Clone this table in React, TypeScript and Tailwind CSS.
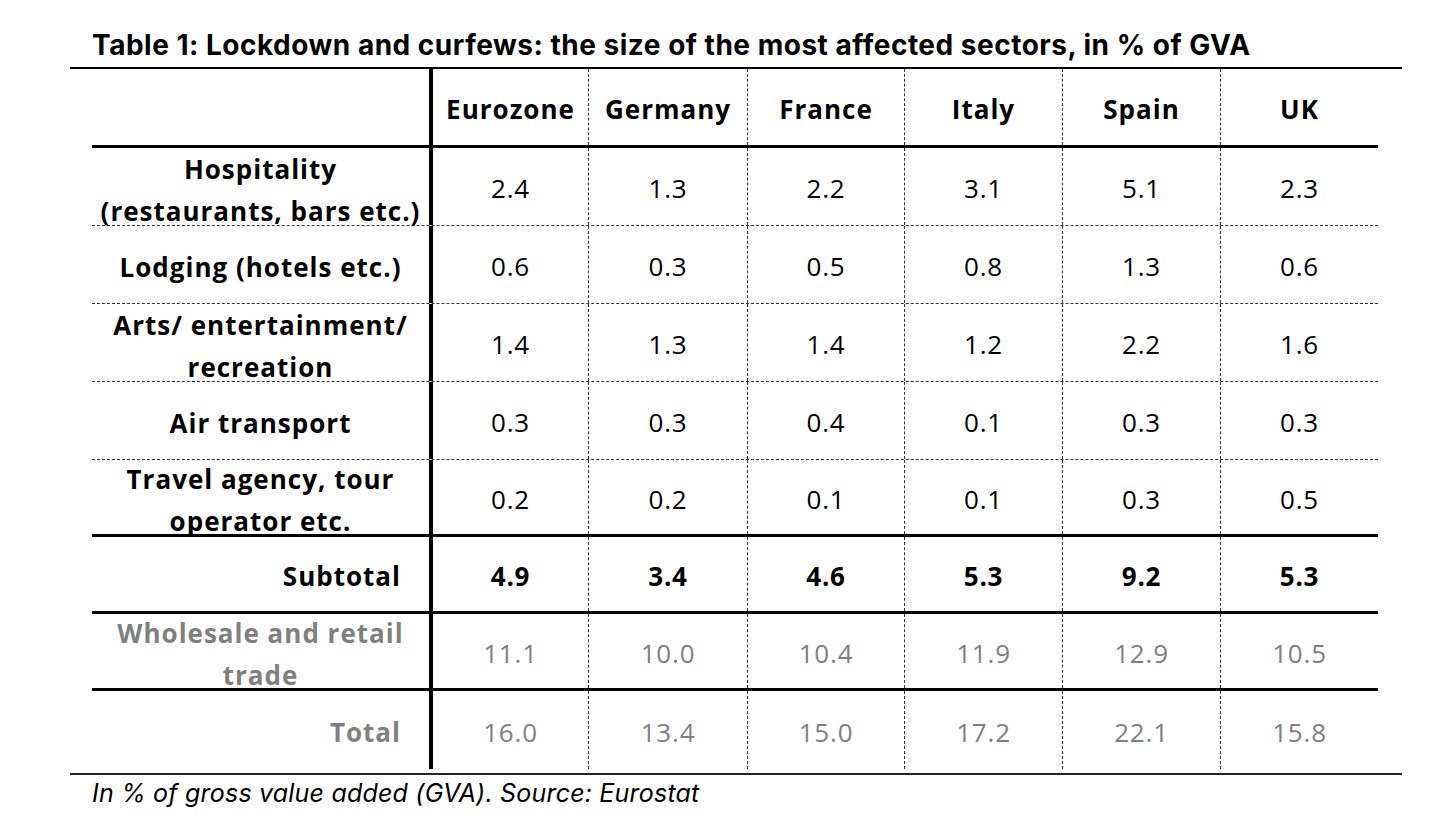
import React from "react";

type Row = {
  label: React.ReactNode;
  values: string[];
  kind: "normal" | "subtotal" | "gray";
  align?: "center" | "right";
  h: string;
  border: string;
  twoLine?: boolean;
};

const widths = ["w-[156px]", "w-[159px]", "w-[157px]", "w-[158px]", "w-[158px]", "w-[157px]"];
const headers = ["Eurozone", "Germany", "France", "Italy", "Spain", "UK"];

const rows: Row[] = [
  {
    label: (
      <>
        Hospitality
        <br />
        (restaurants, bars etc.)
      </>
    ),
    values: ["2.4", "1.3", "2.2", "3.1", "5.1", "2.3"],
    kind: "normal",
    h: "h-[78px]",
    border: "border-b border-dashed border-[#333]",
    twoLine: true,
  },
  {
    label: "Lodging (hotels etc.)",
    values: ["0.6", "0.3", "0.5", "0.8", "1.3", "0.6"],
    kind: "normal",
    h: "h-[78px]",
    border: "border-b border-dashed border-[#333]",
  },
  {
    label: (
      <>
        Arts/ entertainment/
        <br />
        recreation
      </>
    ),
    values: ["1.4", "1.3", "1.4", "1.2", "2.2", "1.6"],
    kind: "normal",
    h: "h-[78px]",
    border: "border-b border-dashed border-[#333]",
    twoLine: true,
  },
  {
    label: "Air transport",
    values: ["0.3", "0.3", "0.4", "0.1", "0.3", "0.3"],
    kind: "normal",
    h: "h-[78px]",
    border: "border-b border-dashed border-[#333]",
  },
  {
    label: (
      <>
        Travel agency, tour
        <br />
        operator etc.
      </>
    ),
    values: ["0.2", "0.2", "0.1", "0.1", "0.3", "0.5"],
    kind: "normal",
    h: "h-[77px]",
    border: "border-b-[3px] border-black",
    twoLine: true,
  },
  {
    label: "Subtotal",
    values: ["4.9", "3.4", "4.6", "5.3", "9.2", "5.3"],
    kind: "subtotal",
    align: "right",
    h: "h-[77px]",
    border: "border-b-[3px] border-black",
  },
  {
    label: (
      <>
        Wholesale and retail
        <br />
        trade
      </>
    ),
    values: ["11.1", "10.0", "10.4", "11.9", "12.9", "10.5"],
    kind: "gray",
    h: "h-[77px]",
    border: "border-b-[3px] border-black",
    twoLine: true,
  },
  {
    label: "Total",
    values: ["16.0", "13.4", "15.0", "17.2", "22.1", "15.8"],
    kind: "gray",
    align: "right",
    h: "h-[78px]",
    border: "",
  },
];

export default function App() {
  return (
    <div className="w-[1439px] h-[831px] bg-white overflow-hidden">
      <div
        className="pl-[92px] pt-[26px] h-[67px] text-[28px] font-bold leading-[38px] text-black tracking-[0.5px] whitespace-nowrap"
        style={{ fontFamily: "Inter, 'Liberation Sans', sans-serif" }}
      >
        Table 1: Lockdown and curfews: the size of the most affected sectors, in % of GVA
      </div>
      <div className="ml-[70px] w-[1332px] h-[2px] bg-black" />
      <div
        className="ml-[92px] w-[1286px] text-[26px] text-black"
        style={{ fontFamily: "'Open Sans', Lato, sans-serif" }}
      >
        {/* header */}
        <div className="flex h-[79px] border-b-[3px] border-black">
          <div className="w-[341px] border-r-[4px] border-black" />
          {headers.map((h, i) => (
            <div
              key={h}
              className={`${widths[i]} flex items-center justify-center pt-[4px] font-bold tracking-[1px] ${
                i < 5 ? "border-r border-dashed border-[#333]" : ""
              }`}
            >
              {h}
            </div>
          ))}
        </div>
        {rows.map((r, ri) => {
          const color = r.kind === "gray" ? "text-[#808080]" : "text-black";
          return (
            <div key={ri} className={`flex ${r.h} ${r.border}`}>
              <div
                className={`w-[341px] border-r-[4px] border-black flex items-center font-bold leading-[42px] tracking-[1px] ${color} ${
                  r.align === "right" ? "justify-end text-right pr-[28px]" : "justify-center text-center"
                } ${r.twoLine ? "pt-[6px]" : "pt-[4px]"}`}
              >
                <div className="whitespace-nowrap">{r.label}</div>
              </div>
              {r.values.map((v, i) => (
                <div
                  key={i}
                  className={`${widths[i]} flex items-center justify-center pt-[4px] tracking-[0.8px] ${color} ${
                    r.kind === "subtotal" ? "font-bold" : ""
                  } ${i < 5 ? "border-r border-dashed border-[#333]" : ""}`}
                >
                  {v}
                </div>
              ))}
            </div>
          );
        })}
      </div>
      <div className="ml-[70px] mt-[4px] w-[1332px] h-[2px] bg-[#222]" />
      <div
        className="pl-[92px] pt-[1px] text-[25px] italic leading-[34px] text-black tracking-[0.2px]"
        style={{ fontFamily: "Inter, 'Liberation Sans', sans-serif" }}
      >
        In % of gross value added (GVA). Source: Eurostat
      </div>
    </div>
  );
}
